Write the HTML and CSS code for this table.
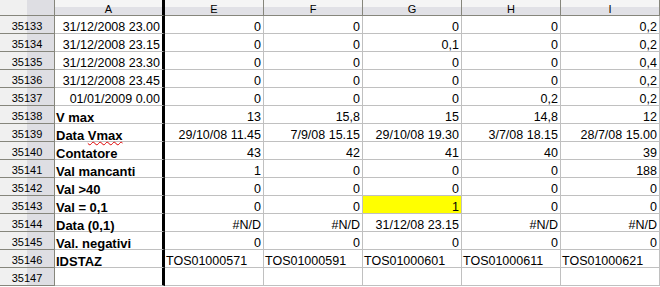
FILE: index.html
```html
<!DOCTYPE html>
<html>
<head>
  <title>Foglio1</title>
  <link rel="stylesheet" href="styles.css">
</head>
<body>
  <div class="sheet" id="sheet">
    <div class="corner"></div>
    <div class="col-head col-a">A</div>
    <div class="col-head">E</div>
    <div class="col-head">F</div>
    <div class="col-head">G</div>
    <div class="col-head">H</div>
    <div class="col-head">I</div>
  </div>
  <script>
    // each row: [row number, column A, E, F, G, H, I]
    const rows = [
      [35133, "31/12/2008 23.00", "0", "0", "0", "0", "0,2"],
      [35134, "31/12/2008 23.15", "0", "0", "0,1", "0", "0,2"],
      [35135, "31/12/2008 23.30", "0", "0", "0", "0", "0,4"],
      [35136, "31/12/2008 23.45", "0", "0", "0", "0", "0,2"],
      [35137, "01/01/2009 0.00", "0", "0", "0", "0,2", "0,2"],
      [35138, "V max", "13", "15,8", "15", "14,8", "12"],
      [35139, "Data Vmax", "29/10/08 11.45", "7/9/08 15.15", "29/10/08 19.30", "3/7/08 18.15", "28/7/08 15.00"],
      [35140, "Contatore", "43", "42", "41", "40", "39"],
      [35141, "Val mancanti", "1", "0", "0", "0", "188"],
      [35142, "Val >40", "0", "0", "0", "0", "0"],
      [35143, "Val = 0,1", "0", "0", "1", "0", "0"],
      [35144, "Data (0,1)", "#N/D", "#N/D", "31/12/08 23.15", "#N/D", "#N/D"],
      [35145, "Val. negativi", "0", "0", "0", "0", "0"],
      [35146, "IDSTAZ", "TOS01000571", "TOS01000591", "TOS01000601", "TOS01000611", "TOS01000621"],
      [35147, "", "", "", "", "", ""]
    ];

    const sheet = document.getElementById("sheet");

    function addCell(cls, text) {
      const div = document.createElement("div");
      div.className = cls;
      div.textContent = text;
      sheet.appendChild(div);
      return div;
    }

    rows.forEach(row => {
      addCell("row-head", row[0]);

      // dates in A are right aligned, the summary labels are bold
      const isDate = /^\d/.test(row[1]);
      const a = addCell("cell col-a " + (isDate ? "num" : "label"), "");
      if (row[1] === "Data Vmax") {
        a.innerHTML = 'Data <span class="spell">Vmax</span>';
      } else {
        a.textContent = row[1];
      }

      for (let i = 2; i < row.length; i++) {
        const isId = row[1] === "IDSTAZ";
        const cell = addCell("cell" + (isId ? "" : " num"), row[i]);
        if (row[0] === 35143 && i === 4) cell.classList.add("hl");
      }
    });
  </script>
</body>
</html>
```

FILE: styles.css
```css
body {
  margin: 0;
  background: #fff;
  font-family: "Liberation Sans", Arial, sans-serif;
}

/* Spreadsheet grid */
.sheet {
  display: grid;
  grid-template-columns: 55px 110px repeat(5, 99px);
  grid-template-rows: 16px;
  grid-auto-rows: 18px;
  width: 660px;
}

.sheet > div {
  box-sizing: border-box;
  white-space: nowrap;
}

/* Header cells */
.corner,
.row-head {
  background: linear-gradient(to right, #f0f0f0 50%, #dedee3 50%);
  border-right: 1px solid #86867c;
  border-bottom: 1px solid #86867c;
}

.col-head {
  background: linear-gradient(#f5f5f5 50%, #e1e1e6 50%);
  border-right: 1px solid #86867c;
  border-bottom: 1px solid #86867c;
  font-size: 11px;
  line-height: 15px;
  padding-top: 2px;
  text-align: center;
}

.row-head {
  font-size: 11px;
  line-height: 17px;
  padding-top: 2px;
  text-align: center;
}

/* Body cells */
.cell {
  border-right: 1px solid #c0c0c0;
  border-bottom: 1px solid #c0c0c0;
  font-size: 12.5px;
  line-height: 17px;
  padding: 3px 2px 0 1px;
}

.col-a {
  border-right: 3px solid #000;
}

.col-head.col-a {
  border-right: 3px solid #000;
}

.num {
  text-align: right;
}

.label {
  font-size: 13px;
  font-weight: bold;
}

.hl {
  background: #ffff00;
}

/* Spell check underline */
.spell {
  text-decoration: underline wavy #e00000;
  text-decoration-thickness: 1px;
  text-underline-offset: 1px;
  text-decoration-skip-ink: none;
}
```
